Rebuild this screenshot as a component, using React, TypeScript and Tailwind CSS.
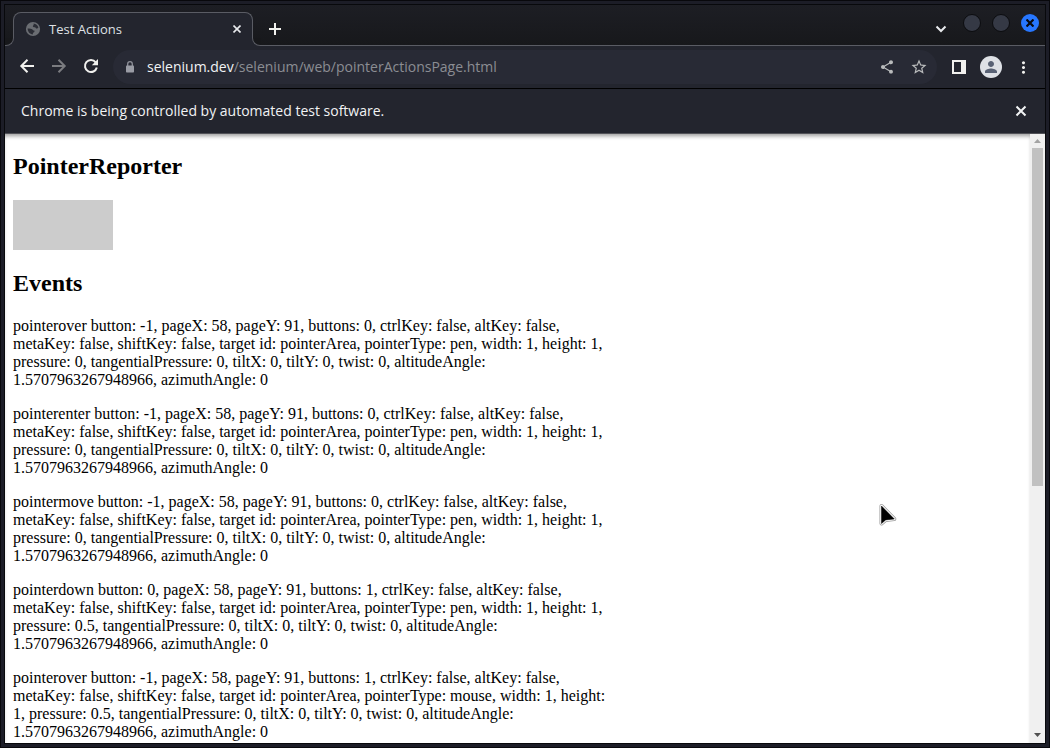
import React from "react";
import { MdMoreVert, MdPerson, MdShare, MdStarBorder } from "react-icons/md";

type PointerEntry = {
  event: string;
  button: number;
  buttons: number;
  pointerType: string;
  pressure: number;
};

const entries: PointerEntry[] = [
  { event: "pointerover", button: -1, buttons: 0, pointerType: "pen", pressure: 0 },
  { event: "pointerenter", button: -1, buttons: 0, pointerType: "pen", pressure: 0 },
  { event: "pointermove", button: -1, buttons: 0, pointerType: "pen", pressure: 0 },
  { event: "pointerdown", button: 0, buttons: 1, pointerType: "pen", pressure: 0.5 },
  { event: "pointerover", button: -1, buttons: 1, pointerType: "mouse", pressure: 0.5 },
];

function describe(e: PointerEntry) {
  return (
    `${e.event} button: ${e.button}, pageX: 58, pageY: 91, buttons: ${e.buttons}, ` +
    "ctrlKey: false, altKey: false, metaKey: false, shiftKey: false, target id: pointerArea, " +
    `pointerType: ${e.pointerType}, width: 1, height: 1, pressure: ${e.pressure}, ` +
    "tangentialPressure: 0, tiltX: 0, tiltY: 0, twist: 0, " +
    "altitudeAngle: 1.5707963267948966, azimuthAngle: 0"
  );
}

function IconButton({
  label,
  className = "",
  children,
}: {
  label: string;
  className?: string;
  children: React.ReactNode;
}) {
  return (
    <button
      type="button"
      aria-label={label}
      className={`flex size-6 shrink-0 items-center justify-center ${className}`}
    >
      {children}
    </button>
  );
}

function LineIcon({ d, size = 16, children }: { d: string; size?: number; children?: React.ReactNode }) {
  return (
    <svg
      width={size}
      height={size}
      viewBox={`0 0 ${size} ${size}`}
      fill="none"
      stroke="currentColor"
      strokeWidth="2"
      aria-hidden="true"
    >
      <path d={d} />
      {children}
    </svg>
  );
}

function GlobeIcon() {
  return (
    <svg width="16" height="16" viewBox="0 0 16 16" className="shrink-0" aria-hidden="true">
      <circle cx="8" cy="8" r="7.100" fill="#6a6d72" />
      <path
        d="M8.600 2.600c2.300.2 4.200 1.700 4.800 3.900-.5 1-1.400 1.300-2.300.9-.4-.9-1-1.300-2.100-1.200-1-.1-1.300-.8-1-1.500.7-.4.9-1.200.6-2.100z"
        fill="#2b2d35"
      />
      <path
        d="M2.600 7.600c1.500-.3 3.300-.1 4.600.7.500.9 1.200 1.200 2.200 1.300.4.900-.1 1.700-1 2-.5.500-.4 1.200-.7 1.800-2.800 0-5-2.500-5.100-5.800z"
        fill="#2b2d35"
      />
    </svg>
  );
}

function LockIcon() {
  return (
    <svg width="10" height="12" viewBox="0 0 10 12" className="mx-1 shrink-0" aria-hidden="true">
      <path d="M2.700 5V3a2.300 2.300 0 0 1 4.600 0v2" fill="none" stroke="#8f919a" strokeWidth="1.300" />
      <rect x="1" y="4.500" width="8" height="7" rx=".8" fill="#9a9ca5" />
    </svg>
  );
}

function TabStrip() {
  return (
    <header className="flex h-[41px] shrink-0 items-end bg-linear-to-b from-[#1d1e24] to-[#17181b]">
      <div className="flex w-64 shrink-0 flex-col">
        <div className="mx-2 flex h-[26px] items-start rounded-t-lg border-x border-t border-[#5a5c64] bg-[#23252e] pt-2 pr-[7px] pl-[11px]">
          <GlobeIcon />
          <span className="ml-2 flex-1 text-[13px] leading-4 text-[#dfe1e5]">Test Actions</span>
          <button
            type="button"
            aria-label="Close tab"
            className="flex size-4 items-center justify-center text-[#e8eaed]"
          >
            <svg width="8" height="8" viewBox="0 0 8 8" stroke="currentColor" strokeWidth="1.600">
              <path d="M.5.500l7 7M7.500.500l-7 7" />
            </svg>
          </button>
        </div>
        <div className="flex h-2 bg-[#23252e]">
          <div className="w-[9px] rounded-br-lg border-r border-b border-[#5a5c64] bg-[#17181b]" />
          <div className="flex-1" />
          <div className="w-[9px] rounded-bl-lg border-b border-l border-[#5a5c64] bg-[#17181b]" />
        </div>
      </div>
      <div className="flex h-full flex-1 border-b border-[#5a5c64] pr-1.5">
        <IconButton label="New tab" className="mt-3 ml-0.5 text-[#f1f1ee]">
          <LineIcon d="M8 2v12M2 8h12" />
        </IconButton>
        <div className="flex-1" />
        <button
          type="button"
          aria-label="Search tabs"
          className="mt-4 mr-3.5 flex size-4 items-center justify-center text-[#e8eaed]"
        >
          <svg width="12" height="8" viewBox="0 0 12 8" fill="none" stroke="currentColor" strokeWidth="2">
            <path d="M1.500 1.500 6 6l4.500-4.500" />
          </svg>
        </button>
        <div className="mt-[9px] flex gap-[11px]">
          <button
            type="button"
            aria-label="Minimize"
            className="size-[18px] rounded-full border border-[#0b0c0f] bg-[#353945]"
          />
          <button
            type="button"
            aria-label="Maximize"
            className="size-[18px] rounded-full border border-[#0b0c0f] bg-[#353945]"
          />
          <button
            type="button"
            aria-label="Close window"
            className="flex size-[18px] items-center justify-center rounded-full bg-[#2777ff] text-[#080a10]"
          >
            <svg width="8" height="8" viewBox="0 0 8 8" stroke="currentColor" strokeWidth="2.200">
              <path d="M.5.500l7 7M7.500.500l-7 7" />
            </svg>
          </button>
        </div>
      </div>
    </header>
  );
}

function Toolbar() {
  return (
    <nav
      aria-label="Browser toolbar"
      className="flex h-[43px] shrink-0 items-center border-b border-black bg-[#23252e] px-2.5 text-[#f1f1ee]"
    >
      <div className="flex gap-2 pb-0.5">
        <IconButton label="Back">
          <LineIcon d="M15 8H2.500M8.500 1.800 2.300 8l6.200 6.200" />
        </IconButton>
        <IconButton label="Forward" className="text-[#7b7c80]">
          <LineIcon d="M1 8h12.500M7.500 1.800 13.700 8l-6.200 6.200" />
        </IconButton>
        <IconButton label="Reload">
          <LineIcon d="M12.700 4.300A6 6 0 1 0 13.800 9.500">
            <path d="M15 1v6.200H8.800z" fill="currentColor" stroke="none" />
          </LineIcon>
        </IconButton>
      </div>
      <div className="ml-2.5 flex h-[34px] min-w-0 flex-1 items-center rounded-full bg-[#282a35] pr-1.5 pl-2">
        <LockIcon />
        <a
          href="#page"
          className="ml-2 flex-1 truncate text-sm leading-5 text-[#8b8d93]"
        >
          <span className="text-[#f1f3f4]">selenium.dev</span>
          /selenium/web/pointerActionsPage.html
        </a>
        <div className="flex gap-2 text-[#b9bbbc]">
          <IconButton label="Share this page">
            <MdShare size={16} />
          </IconButton>
          <IconButton label="Bookmark this tab">
            <MdStarBorder size={18} />
          </IconButton>
        </div>
      </div>
      <div className="ml-2.5 flex gap-2">
        <IconButton label="Side panel">
          <svg width="14" height="14" viewBox="0 0 14 14" fill="currentColor">
            <path fillRule="evenodd" d="M0 0h14v14H0zM2 2v10h7V2z" />
          </svg>
        </IconButton>
        <IconButton label="Profile">
          <span className="flex size-[22px] items-center justify-center rounded-full bg-[#dee1e6] text-[#596275]">
            <MdPerson size={18} />
          </span>
        </IconButton>
        <IconButton label="Menu">
          <MdMoreVert size={19} />
        </IconButton>
      </div>
    </nav>
  );
}

function ScrollTrack() {
  return (
    <div
      aria-hidden="true"
      className="flex w-[15px] shrink-0 flex-col items-center bg-[#f0f0f0]"
    >
      <svg width="15" height="14" viewBox="0 0 15 14" className="shrink-0" fill="#a3a3a3">
        <path d="M7.500 5 11 9H4z" />
      </svg>
      <div className="w-[11px] basis-[338px] bg-[#c1c1c1]" />
      <div className="flex-1" />
      <svg width="15" height="15" viewBox="0 0 15 15" className="shrink-0" fill="#505050">
        <path d="M4 5h7L7.500 9z" />
      </svg>
    </div>
  );
}

const POINTER = "M2.500 3v17.600l4.200-3.700 8.600-.9z";

function MousePointer() {
  return (
    <svg
      className="absolute top-[498px] left-[874px]"
      width="18"
      height="24"
      viewBox="0 0 18 24"
      strokeLinejoin="round"
      aria-hidden="true"
    >
      <path d={POINTER} stroke="#999" strokeWidth="4" />
      <path d={POINTER} stroke="#fff" strokeWidth="2.500" />
      <path d={POINTER} stroke="#000" strokeWidth=".5" />
    </svg>
  );
}

export default function App() {
  return (
    <div className="h-screen border border-[#08080c] bg-[#1c1d27] p-[3px] font-['Open_Sans',sans-serif]">
      <div className="relative flex h-full flex-col border border-[#08090c] bg-white">
        <TabStrip />
        <Toolbar />
        <div
          role="status"
          className="flex h-[45px] shrink-0 items-center border-b border-[#505157] bg-[#23252e] pr-3 pl-4 text-[#f1f3f4]"
        >
          <p className="flex-1 text-sm leading-5">
            Chrome is being controlled by automated test software.
          </p>
          <IconButton label="Dismiss">
            <LineIcon d="M3.500 3.500l9 9M12.500 3.500l-9 9" />
          </IconButton>
        </div>
        <div className="flex min-h-0 flex-1">
          <main
            id="page"
            className="min-w-0 flex-1 overflow-hidden px-2 pt-5 font-['Liberation_Serif',serif] text-base leading-[18px] text-black shadow-[inset_0_4px_4px_-2px_#00000066]"
          >
            <h2 className="text-2xl leading-6 font-bold">PointerReporter</h2>
            <div className="mt-[22px] h-[50px] w-[100px] bg-[#cccccc]" />
            <h2 className="mt-5 text-2xl leading-[27px] font-bold">Events</h2>
            <div className="mt-5 flex w-[600px] flex-col gap-4">
              {entries.map((entry, i) => (
                <p key={i}>{describe(entry)}</p>
              ))}
            </div>
          </main>
          <ScrollTrack />
        </div>
        <MousePointer />
      </div>
    </div>
  );
}
